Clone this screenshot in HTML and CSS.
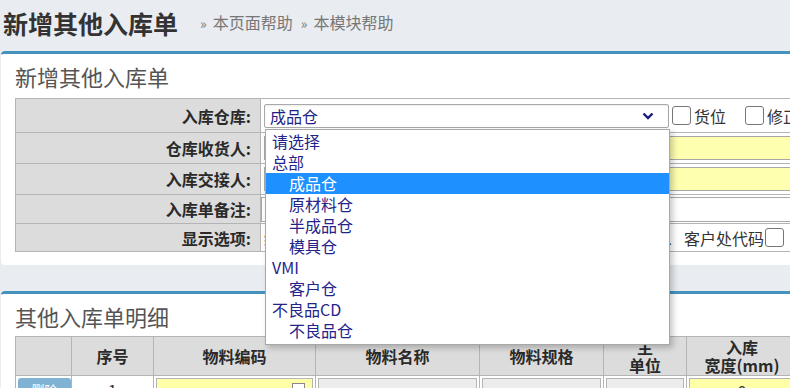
FILE: index.html
```html
<!DOCTYPE html>
<html>
<head>
  <meta charset="UTF-8">
  <link rel="stylesheet" href="styles.css">
</head>
<body>
  <div class="page-head">
    <h1 class="page-title">新增其他入库单</h1>
    <a class="help-link"><span class="raquo">»</span>本页面帮助</a>
    <a class="help-link"><span class="raquo">»</span>本模块帮助</a>
  </div>

  <div class="panel panel-form">
    <div class="panel-title">新增其他入库单</div>
    <table class="form-table">
      <tr class="row-1">
        <th>入库仓库:</th>
        <td>
          <div class="field-line">
            <div class="fake-select">
              <span>成品仓</span>
              <svg class="chevron" width="12" height="8" viewBox="0 0 12 8"><path d="M1.5 1.5 L6 6 L10.5 1.5" fill="none" stroke="#1b1b7a" stroke-width="2.4"/></svg>
              <!-- open option list -->
              <ul class="select-list">
                <li class="opt-group">请选择</li>
                <li class="opt-group">总部</li>
                <li class="opt-child selected">成品仓</li>
                <li class="opt-child">原材料仓</li>
                <li class="opt-child">半成品仓</li>
                <li class="opt-child">模具仓</li>
                <li class="opt-group">VMI</li>
                <li class="opt-child">客户仓</li>
                <li class="opt-group">不良品CD</li>
                <li class="opt-child">不良品仓</li>
              </ul>
            </div>
            <label class="check"><input type="checkbox">货位</label>
            <label class="check"><input type="checkbox">修正入库数量</label>
          </div>
        </td>
      </tr>
      <tr class="row-2">
        <th>仓库收货人:</th>
        <td><input class="text-input required" type="text"></td>
      </tr>
      <tr class="row-3">
        <th>入库交接人:</th>
        <td><input class="text-input required" type="text"></td>
      </tr>
      <tr class="row-4">
        <th>入库单备注:</th>
        <td><input class="text-input note" type="text"></td>
      </tr>
      <tr class="row-5">
        <th>显示选项:</th>
        <td>
          <div class="field-line">
            <span class="show-opts">统计物料名称、物料规格、主单位、入库宽度、入库长度、入库数量</span>
            <span class="sep">、</span>
            <span class="show-last">客户处代码</span><input class="small-check" type="checkbox">
          </div>
        </td>
      </tr>
    </table>
  </div>

  <div class="panel panel-detail">
    <div class="panel-title">其他入库单明细</div>
    <table class="detail-table">
      <tr class="head-row">
        <th class="c-op"></th>
        <th class="c-no">序号</th>
        <th class="c-code">物料编码</th>
        <th class="c-name">物料名称</th>
        <th class="c-spec">物料规格</th>
        <th class="c-unit">主<br>单位</th>
        <th class="c-width">入库<br>宽度(mm)</th>
      </tr>
      <tr class="data-row">
        <td><span class="row-btn">删除</span></td>
        <td class="plain">1</td>
        <td><div class="cell-input yellow"><span class="pick-box"></span></div></td>
        <td><div class="cell-input"></div></td>
        <td><div class="cell-input"></div></td>
        <td><div class="cell-input"></div></td>
        <td><div class="cell-input yellow num">0</div></td>
      </tr>
    </table>
  </div>
</body>
</html>
```

FILE: styles.css
```css
body {
  margin: 0;
  background: #e9ecf1;
  font-family: "Noto Sans CJK SC", "Noto Sans", sans-serif;
  color: #333;
  overflow: hidden;
  width: 790px;
  height: 388px;
}

.page-head {
  display: flex;
  align-items: center;
  height: 45px;
  padding: 0 0 6px 3px;
}

.page-title {
  margin: 0 22px 0 0;
  font-size: 25px;
  font-weight: bold;
  color: #333;
  line-height: 30px;
}

.help-link {
  font-size: 16px;
  color: #777;
  margin-right: 8px;
  line-height: 20px;
}

.raquo {
  margin-right: 6px;
  font-size: 14px;
}

.panel {
  width: 1100px;
  margin-left: 1px;
  background: #fff;
  border-top: 3px solid #4592be;
  border-radius: 4px;
  padding: 0 14px 13px;
}

.panel-title {
  font-size: 22px;
  line-height: 44px;
  color: #555;
}

.panel-detail {
  margin-top: 26px;
}

.panel-detail .panel-title {
  line-height: 40px;
  padding-top: 2px;
}

/* form table */
.form-table {
  border-collapse: collapse;
  width: 1000px;
}

.form-table th,
.form-table td {
  border: 1px solid #b4b4b4;
  padding: 0;
}

.form-table th {
  width: 235px;
  background: #dcdcdc;
  text-align: right;
  font-size: 16px;
  font-weight: bold;
  color: #2a2a2a;
  padding-right: 9px;
}

.row-1 { height: 34px; }
.row-2, .row-3 { height: 31px; }
.row-4 { height: 29px; }
.row-5 { height: 28px; }

.field-line {
  display: flex;
  align-items: center;
  padding-left: 3px;
}

.fake-select {
  position: relative;
  width: 384px;
  height: 22px;
  border: 1px solid #a9a9a9;
  border-radius: 2px;
  padding: 0 14px 0 5px;
  display: flex;
  align-items: center;
  justify-content: space-between;
  font-size: 16px;
  color: #1f1f8a;
  box-shadow: inset 0 1px 2px rgba(0, 0, 0, 0.08);
}

.chevron {
  margin-top: 1px;
}

.select-list {
  position: absolute;
  top: 24px;
  left: 0;
  width: 403px;
  margin: 0;
  padding: 1px 0 3px;
  list-style: none;
  background: #fff;
  border: 1px solid #a8a8a8;
  box-shadow: 3px 3px 6px rgba(0, 0, 0, 0.22);
  z-index: 10;
}

.select-list li {
  height: 21px;
  line-height: 21px;
  font-size: 16px;
  color: #23238a;
}

.opt-group {
  padding-left: 6px;
}

.opt-child {
  padding-left: 23px;
}

.select-list .selected {
  background: #1e90ff;
  color: #fff;
}

.check {
  display: flex;
  align-items: center;
  margin-left: 3px;
  margin-right: 16px;
  font-size: 16px;
  color: #333;
  white-space: nowrap;
}

.check input,
.small-check {
  appearance: none;
  width: 19px;
  height: 19px;
  margin: 0 3px 0 0;
  border: 1px solid #767676;
  border-radius: 3px;
  background: #fff;
}

.text-input {
  display: block;
  width: 600px;
  height: 22px;
  margin-left: 3px;
  border: 1px solid #a8a8a8;
  padding: 0 4px;
  box-sizing: content-box;
}

.text-input.required {
  background: #ffffb0;
}

.text-input.note {
  margin-left: 0;
  height: 23px;
}

.show-opts {
  width: 400px;
  overflow: hidden;
  white-space: nowrap;
  font-size: 15px;
  color: #333;
}

.sep {
  font-size: 15px;
  color: #333;
  width: 18px;
  margin-left: 2px;
}

.show-last {
  font-size: 16px;
  color: #333;
  white-space: nowrap;
  margin-right: 1px;
}

/* detail table */
.detail-table {
  border-collapse: collapse;
  width: 775px;
  table-layout: fixed;
}

.detail-table th,
.detail-table td {
  border: 1px solid #b4b4b4;
  padding: 0;
}

.detail-table th {
  height: 38px;
  background: #dcdcdc;
  font-size: 16px;
  font-weight: bold;
  color: #2a2a2a;
  line-height: 18px;
}

.c-op { width: 55px; }
.c-no { width: 81px; }
.c-code { width: 161px; }
.c-name { width: 163px; }
.c-spec { width: 123px; }
.c-unit { width: 82px; }
.c-width { width: 110px; }

.data-row td {
  height: 30px;
  vertical-align: top;
  padding-top: 2px;
  background: #fff;
}

.data-row .plain {
  text-align: center;
  font-size: 16px;
  line-height: 24px;
}

.row-btn {
  display: block;
  margin: 0 0 0 2px;
  height: 24px;
  background: #80b3d3;
  border-radius: 3px;
  color: #fff;
  font-size: 13px;
  text-align: center;
  line-height: 24px;
}

.cell-input {
  position: relative;
  height: 24px;
  margin: 0 2px;
  border: 1px solid #b4b4b4;
  background: #ececec;
}

.cell-input.yellow {
  background: #ffffa8;
}

.cell-input.num {
  text-align: center;
  font-size: 16px;
  line-height: 24px;
}

.pick-box {
  position: absolute;
  top: 4px;
  right: 7px;
  width: 11px;
  height: 11px;
  border: 1px solid #888;
  background: #fff;
}
```
